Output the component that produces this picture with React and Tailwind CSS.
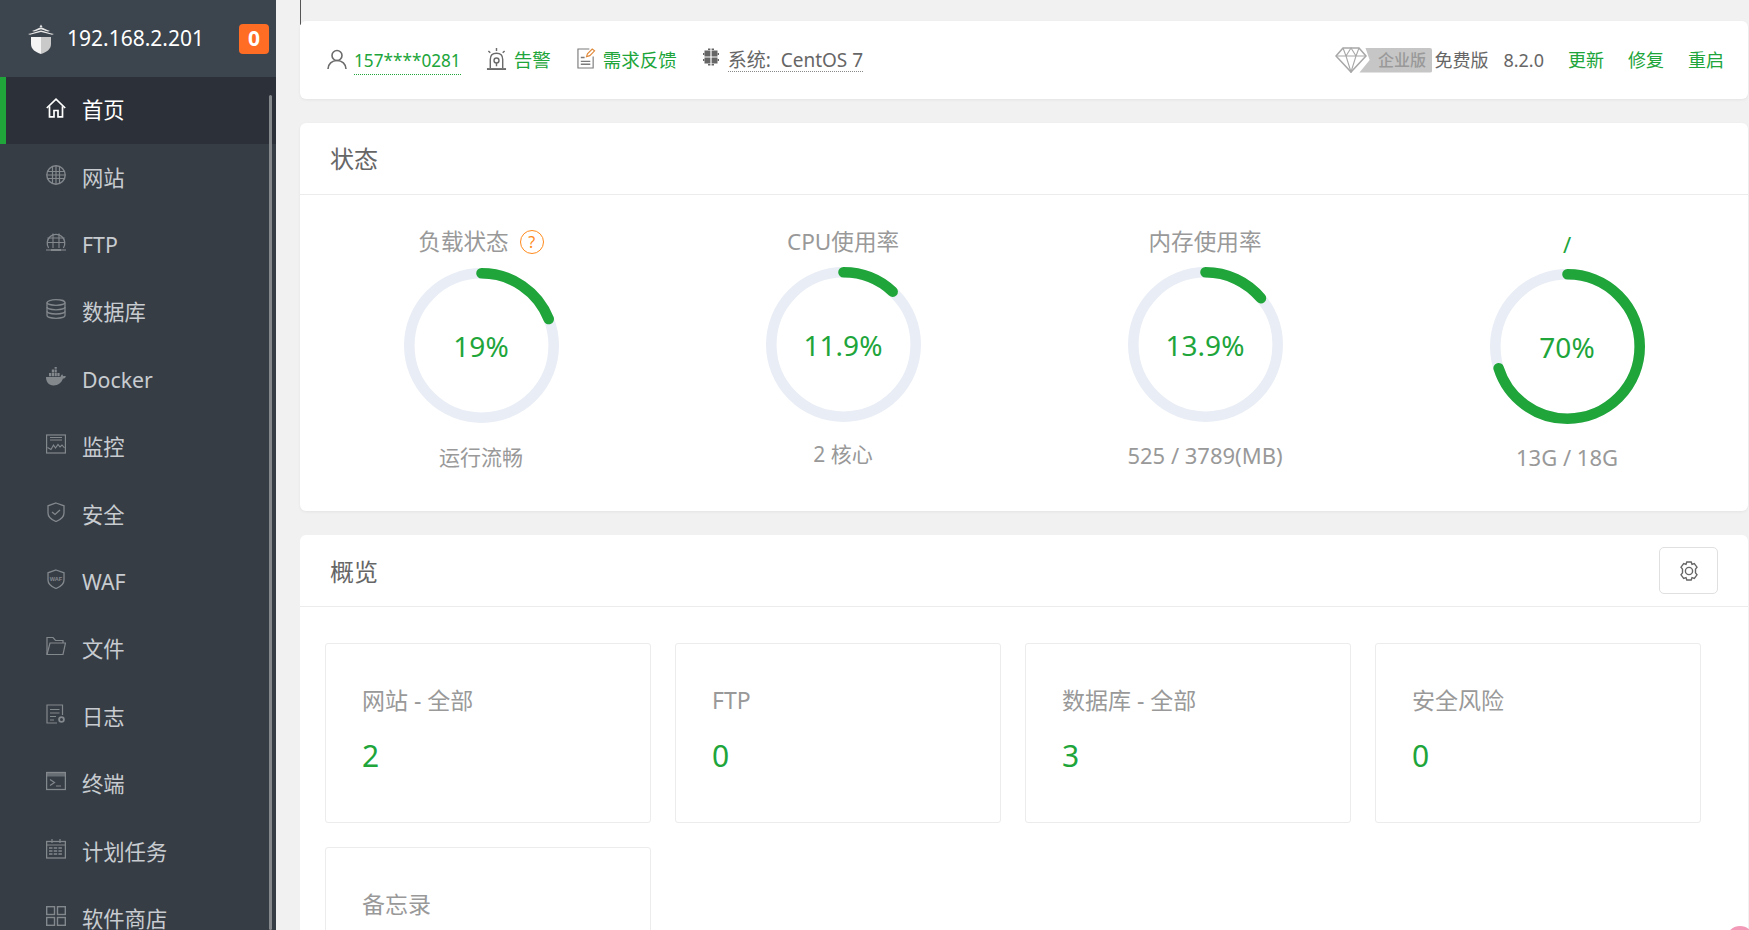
const GREEN = '#20a53a'

function IconHome({ className }) {
  return (
    <svg viewBox="0 0 20 20" className={className} fill="none" stroke="currentColor" strokeWidth="1.7">
      <path d="M0.8 10 10 1.2 19.2 10" />
      <path d="M3.5 8.2V18.8H8V12.5H12V18.8H16.5V8.2" />
    </svg>
  )
}
function IconGlobe({ className }) {
  return (
    <svg viewBox="0 0 20 20" className={className} fill="none" stroke="currentColor" strokeWidth="1.2">
      <circle cx="10" cy="10" r="9.2" strokeWidth="1.4" />
      <path d="M1 6.5H19M1 10H19M1 13.5H19M6.5 1.5V18.5M10 1V19M13.5 1.5V18.5" />
    </svg>
  )
}
function IconFtp({ className }) {
  return (
    <svg viewBox="0 0 20 20" className={className} fill="none" stroke="currentColor" strokeWidth="1.1">
      <path d="M2.6 16A8.8 8.8 0 1 1 17.4 16" strokeWidth="1.3" />
      <path d="M1.4 6H18.6M1 10.5H19M7 1.6V16M13 1.6V16" />
      <path d="M0 18H20" />
      <path d="M5 17H15V19H5Z" fill="currentColor" stroke="none" />
    </svg>
  )
}
function IconDb({ className }) {
  return (
    <svg viewBox="0 0 20 20" className={className} fill="none" stroke="currentColor" strokeWidth="1.3">
      <ellipse cx="10" cy="3.5" rx="9" ry="2.8" />
      <path d="M1 3.5V16.5C1 18 5 19.3 10 19.3S19 18 19 16.5V3.5" />
      <path d="M1 8C1 9.5 5 10.8 10 10.8S19 9.5 19 8M1 12.3C1 13.8 5 15 10 15S19 13.8 19 12.3" />
    </svg>
  )
}
function IconDocker({ className }) {
  return (
    <svg viewBox="0 0 20 20" className={className} fill="currentColor">
      <path d="M0 10H14.5C14.8 8.6 15.6 7.6 16.2 7.2 16.8 8 17 8.7 17 9.2 18 8.8 19 8.9 20 9.4 19.2 11 18 11.6 16.8 11.7 15.5 15.6 12.5 18.4 7.5 18.4 2.5 18.4 0 14.8 0 10Z" />
      <path d="M3 6H5.2V9.2H3ZM5.8 6H8V9.2H5.8ZM8.6 6H10.8V9.2H8.6ZM11.4 6H13.6V9.2H11.4ZM5.8 2.4H8V5.4H5.8ZM8.6 2.4H10.8V5.4H8.6ZM8.6 0H10.8V1.8H8.6Z" />
    </svg>
  )
}
function IconMonitor({ className }) {
  return (
    <svg viewBox="0 0 20 20" className={className} fill="none" stroke="currentColor" strokeWidth="1.1">
      <rect x="0.6" y="1" width="18.8" height="18" strokeWidth="1.2" />
      <path d="M4 3.5H16M4 6H16" />
      <path d="M1.5 13.5 5 15.5 7.5 11 9.5 14 12 10.5 14 13 16 11 18.5 14" />
    </svg>
  )
}
function IconShield({ className }) {
  return (
    <svg viewBox="0 0 20 20" className={className} fill="none" stroke="currentColor" strokeWidth="1.3">
      <path d="M10 1 18 3.8V11C18 15 14 18 10 19.5 6 18 2 15 2 11V3.8Z" />
      <path d="M6 10 9 12.5 14 8" />
    </svg>
  )
}
function IconWaf({ className }) {
  return (
    <svg viewBox="0 0 20 20" className={className} fill="none" stroke="currentColor" strokeWidth="1.3">
      <path d="M10 1 18 3.8V11C18 15 14 18 10 19.5 6 18 2 15 2 11V3.8Z" />
      <text x="10" y="12" textAnchor="middle" fontSize="5.6" fontWeight="700" fill="currentColor" stroke="none" fontFamily="'Liberation Sans', sans-serif">WAF</text>
    </svg>
  )
}
function IconFolder({ className }) {
  return (
    <svg viewBox="0 0 20 20" className={className} fill="none" stroke="currentColor" strokeWidth="1.2">
      <path d="M1 18.5V1.5H7L9.5 4.5H17V7" />
      <path d="M1 18.5 4 7H19.5L17 18.5Z" />
    </svg>
  )
}
function IconLog({ className }) {
  return (
    <svg viewBox="0 0 20 20" className={className} fill="none" stroke="currentColor" strokeWidth="1.2">
      <path d="M11 19H1V1H16.5V11" />
      <path d="M4 5.5H13.5M4 9H13.5M4 12.5H10M4 16H8" />
      <circle cx="15.5" cy="15.5" r="2.4" strokeWidth="1.8" />
    </svg>
  )
}
function IconTerminal({ className }) {
  return (
    <svg viewBox="0 0 20 20" className={className} fill="none" stroke="currentColor" strokeWidth="1.2">
      <rect x="0.6" y="1.5" width="18.8" height="17" strokeWidth="1.3" />
      <path d="M0.6 2H19.4V5.5H0.6Z" fill="currentColor" fillOpacity="0.65" stroke="none" />
      <path d="M4 8.5 8.5 11.5 4 14.5M10 15H15" />
    </svg>
  )
}
function IconCalendar({ className }) {
  return (
    <svg viewBox="0 0 20 20" className={className} fill="none" stroke="currentColor" strokeWidth="1.2">
      <rect x="0.6" y="2.5" width="18.8" height="16.5" strokeWidth="1.3" />
      <path d="M6 0V4M14 0V4M0.6 6H19.4" />
      <path d="M3 9H17M3 12H17M3 15H17" strokeDasharray="3.5 1.2" strokeWidth="1.4" />
    </svg>
  )
}
function IconApps({ className }) {
  return (
    <svg viewBox="0 0 20 20" className={className} fill="none" stroke="currentColor" strokeWidth="1.4">
      <rect x="0.7" y="0.7" width="7.8" height="7.8" />
      <rect x="11.5" y="0.7" width="7.8" height="7.8" />
      <rect x="0.7" y="11.5" width="7.8" height="7.8" />
      <rect x="11.5" y="11.5" width="7.8" height="7.8" />
    </svg>
  )
}

function Logo() {
  return (
    <svg viewBox="0 0 28 30" className="w-[28px] h-[30px]">
      <path d="M14 0.5 15.5 3 H12.5Z" fill="#e6e6e6" />
      <path d="M5 7C9 5.5 11 4 14 3.2 17 4 19 5.5 23 7L21 7.6C18 6.6 16 5.8 14 5.2 12 5.8 10 6.6 7 7.6Z" fill="#e6e6e6" />
      <path d="M1 10C6 8.8 10 7.5 14 6.4 18 7.5 22 8.8 27 10L25 10.8C21 9.8 17.5 8.8 14 8 10.5 8.8 7 9.8 3 10.8Z" fill="#e6e6e6" />
      <path d="M4 13H14V30C8 28 4 25 4 20Z" fill="#f4f4f4" />
      <path d="M14 13H24V20C24 25 20 28 14 30Z" fill="#c9c9c9" />
    </svg>
  )
}

const MENU = [
  { name: '首页', Icon: IconHome, active: true },
  { name: '网站', Icon: IconGlobe },
  { name: 'FTP', Icon: IconFtp },
  { name: '数据库', Icon: IconDb },
  { name: 'Docker', Icon: IconDocker },
  { name: '监控', Icon: IconMonitor },
  { name: '安全', Icon: IconShield },
  { name: 'WAF', Icon: IconWaf },
  { name: '文件', Icon: IconFolder },
  { name: '日志', Icon: IconLog },
  { name: '终端', Icon: IconTerminal },
  { name: '计划任务', Icon: IconCalendar },
  { name: '软件商店', Icon: IconApps },
]

function Sidebar() {
  return (
    <aside className="relative w-[276px] shrink-0 h-full overflow-hidden bg-[#363d45]">
      <div className="h-[77px] flex items-center pl-[27px] pr-[7px] bg-[#3c444d]">
        <Logo />
        <span className="ml-[12px] text-[21px] text-white">192.168.2.201</span>
        <span className="ml-auto w-[30px] h-[30px] rounded-[4px] bg-[#ff6c24] text-white text-[21px] font-bold flex items-center justify-center">0</span>
      </div>
      {MENU.map(({ name, Icon, active }) => (
        <div
          key={name}
          className={active
            ? 'h-[67px] flex items-center pl-[40px] border-l-[6px] border-[#20a53a] bg-[#2c3038] text-white'
            : 'h-[67.4px] flex items-center pl-[46px] text-[#c8ccd0]'}
        >
          <span className={active ? 'text-white -mt-[5px]' : 'text-[#83888d] -mt-[6px]'}>
            <Icon className="w-[20px] h-[20px]" />
          </span>
          <span className={active ? 'ml-[16px] -mt-[2px] text-[21.3px] leading-[30px]' : 'ml-[16px] text-[21.3px] leading-[30px]'}>{name}</span>
        </div>
      ))}
      <div className="absolute right-[4px] top-[95px] bottom-0 w-[3px] rounded-full bg-[#85888b]" />
    </aside>
  )
}

function TopBar() {
  return (
    <div className="h-[78px] bg-white rounded-[6px] shadow-[0_1px_3px_rgba(0,0,0,0.06)] flex items-center pl-[27px] pr-[24px] text-[18.5px]">
      <svg viewBox="0 0 20 20" className="w-[20px] h-[20px] -mt-[2px] text-[#6b6b6b]" fill="none" stroke="currentColor" strokeWidth="1.6">
        <circle cx="10" cy="6.5" r="5" />
        <path d="M1 20C1 15 5 11.5 10 11.5S19 15 19 20" />
      </svg>
      <span className="ml-[7px] mt-[2px] text-[17.2px] text-[#20a53a] border-b border-dotted border-[#20a53a] leading-[26px]">157****0281</span>
      <svg viewBox="0 0 22 24" className="ml-[25px] w-[21px] h-[23px] -mt-[1px] text-[#6b6b6b]" fill="none" stroke="currentColor" strokeWidth="1.5">
        <path d="M4.5 21V12C4.5 8 7 5.5 11 5.5S17.5 8 17.5 12V21" />
        <path d="M1 22H21" strokeWidth="2" />
        <circle cx="11" cy="13" r="2.6" />
        <path d="M11 0V3M2.5 3 4.5 5M19.5 3 17.5 5M11 15.5V19" />
      </svg>
      <span className="ml-[7px] text-[#20a53a]">告警</span>
      <svg viewBox="0 0 20 22" className="ml-[26px] w-[19px] h-[21px] -mt-[3px] text-[#7a7a7a]" fill="none" stroke="currentColor" strokeWidth="1.2">
        <path d="M13 1H1V21H17V9" />
        <path d="M4 10H8M4 14H14M4 17H14" strokeWidth="1.5" />
        <path d="M10 9 11 6 16 1 18.5 3 13.5 8Z" stroke="#e08a3c" />
      </svg>
      <span className="ml-[7px] text-[#20a53a]">需求反馈</span>
      <svg viewBox="0 0 16 18" className="ml-[26px] w-[16px] h-[18px] -mt-[6px]" fill="#666">
        <path d="M1.5 2.5H7.4V8.4H1.5ZM8.6 2.5H14.5V8.4H8.6ZM1.5 9.6H7.4V15.5H1.5ZM8.6 9.6H14.5V15.5H8.6ZM5 0.5H7.4V2H5ZM8.6 0.5H11V2H8.6ZM5 16H7.4V17.5H5ZM8.6 16H11V17.5H8.6ZM0 5H1.2V7H0ZM14.8 5H16V7H14.8ZM0 11H1.2V13H0ZM14.8 11H16V13H14.8Z" />
      </svg>
      <span className="ml-[9px] text-[19px] text-[#666] border-b border-dotted border-[#888] leading-[22px]">系统:&nbsp;&nbsp;CentOS 7</span>

      <div className="ml-auto flex items-center text-[18px]">
        <svg viewBox="0 0 32 26" className="w-[32px] h-[26px] text-[#a8a8a8] -mr-[8px]" fill="none" stroke="currentColor" strokeWidth="1.6">
          <path d="M8 1H24L31 9 16 25 1 9Z" />
          <path d="M1 9H31M11 9 16 25 21 9M11 9 8 1M21 9 24 1M11 9 16 1 21 9" strokeWidth="1.1" />
        </svg>
        <span className="h-[25px] w-[73px] flex items-center justify-center rounded-r-[2px] bg-[#c6c6c6] text-[16px] font-medium text-[#999] [clip-path:polygon(0_100%,14%_50%,8%_0,100%_0,100%_100%)]">
          <span className="pl-[12px] leading-none">企业版</span>
        </span>
        <span className="ml-[2px] text-[#666]">免费版</span>
        <span className="ml-[15px] text-[#666]">8.2.0</span>
        <span className="ml-[24px] text-[#20a53a]">更新</span>
        <span className="ml-[24px] text-[#20a53a]">修复</span>
        <span className="ml-[24px] text-[#20a53a]">重启</span>
      </div>
    </div>
  )
}

function Gauge({ title, pct, label, sub, help, titleGreen, subClass, gaugeClass }) {
  const r = 72.2
  const c = 2 * Math.PI * r
  return (
    <div className="flex flex-col items-center">
      <div className={titleGreen ? 'h-[30px] mt-[2px] flex items-center text-[22px] text-[#20a53a]' : 'h-[30px] flex items-center text-[22.6px] text-[#999]'}>
        {title}
        {help && (
          <span className="ml-[11px] w-[24px] h-[24px] rounded-full border border-[#ff8a1c] text-[#ff8a1c] text-[16px] flex items-center justify-center">?</span>
        )}
      </div>
      <div className={`relative w-[155px] h-[155px] ${gaugeClass}`}>
        <svg viewBox="0 0 155 155" className="w-[155px] h-[155px] -rotate-90">
          <circle cx="77.5" cy="77.5" r={r} fill="none" stroke="#e9edf5" strokeWidth="10.6" />
          <circle
            cx="77.5"
            cy="77.5"
            r={r}
            fill="none"
            stroke={GREEN}
            strokeWidth="10.6"
            strokeLinecap="round"
            strokeDasharray={`${c * pct / 100} ${c}`}
          />
        </svg>
        <div className="absolute inset-0 flex items-center justify-center text-[28px] text-[#20a53a]">{label}</div>
      </div>
      <div className={`h-[30px] flex items-center text-[#999] ${subClass}`}>{sub}</div>
    </div>
  )
}

function StatusCard() {
  return (
    <div className="mt-[24px] bg-white rounded-[6px] shadow-[0_1px_3px_rgba(0,0,0,0.06)]">
      <div className="h-[72px] border-b border-[#ececec] flex items-center pl-[30px] pt-[1px] text-[24px] text-[#666]">状态</div>
      <div className="grid grid-cols-4 pt-[32px] h-[316px]">
        <Gauge title="负载状态" help pct={19} label="19%" sub="运行流畅" gaugeClass="mt-[11px]" subClass="mt-[20px] text-[21px]" />
        <Gauge title="CPU使用率" pct={11.9} label="11.9%" sub="2 核心" gaugeClass="mt-[10px]" subClass="mt-[18px] text-[21px]" />
        <Gauge title="内存使用率" pct={13.9} label="13.9%" sub="525 / 3789(MB)" gaugeClass="mt-[10px]" subClass="mt-[18px] text-[22px]" />
        <Gauge title="/" titleGreen pct={70} label="70%" sub="13G / 18G" gaugeClass="mt-[10px]" subClass="mt-[18px] text-[22px]" />
      </div>
    </div>
  )
}

const STATS = [
  { name: '网站 - 全部', value: '2' },
  { name: 'FTP', value: '0' },
  { name: '数据库 - 全部', value: '3' },
  { name: '安全风险', value: '0' },
]

function OverviewCard() {
  return (
    <div className="mt-[24px] bg-white rounded-t-[6px] h-[395px]">
      <div className="h-[72px] border-b border-[#ececec] flex items-center pl-[30px] pr-[30px] text-[24px] text-[#666]">
        <span className="pt-[2px]">概览</span>
        <button className="ml-auto w-[59px] h-[47px] rounded-[5px] border border-[#e0e0e0] flex items-center justify-center text-[#666]">
          <svg viewBox="0 0 20 20" className="w-[20px] h-[20px]" fill="none" stroke="currentColor" strokeWidth="1.4">
            <path d="M7.8 1H12.2L13 3.3 15.3 2.6 18 6.2 16.5 8.2V11.8L18 13.8 15.3 17.4 13 16.7 12.2 19H7.8L7 16.7 4.7 17.4 2 13.8 3.5 11.8V8.2L2 6.2 4.7 2.6 7 3.3Z" />
            <circle cx="10" cy="10" r="3.6" />
          </svg>
        </button>
      </div>
      <div className="grid grid-cols-[repeat(4,326px)] gap-[24px] pl-[25px] pt-[36px]">
        {STATS.map(s => (
          <div key={s.name} className="h-[180px] border border-[#ececec] rounded-[3px] pl-[36px] pt-[41px]">
            <div className="text-[23px] leading-[30px] text-[#999]">{s.name}</div>
            <div className="mt-[21px] text-[30px] leading-[40px] text-[#20a53a]">{s.value}</div>
          </div>
        ))}
        <div className="h-[180px] border border-[#ececec] rounded-[3px] pl-[36px] pt-[41px]">
          <div className="text-[23px] leading-[30px] text-[#999]">备忘录</div>
        </div>
      </div>
    </div>
  )
}

export default function App() {
  return (
    <div className="relative flex w-full h-[930px] overflow-hidden bg-[#f1f1f1] font-['Noto_Sans','Noto_Sans_CJK_SC',sans-serif]">
      <Sidebar />
      <main className="w-[1448px] ml-[24px] shrink-0">
        <div className="h-[21px]">
          <div className="w-px h-[25px] bg-[#555]" />
        </div>
        <TopBar />
        <StatusCard />
        <OverviewCard />
      </main>
      <div className="absolute left-[1726px] top-[926px] w-[28px] h-[28px] rounded-full bg-[#f29ab8]" />
    </div>
  )
}
